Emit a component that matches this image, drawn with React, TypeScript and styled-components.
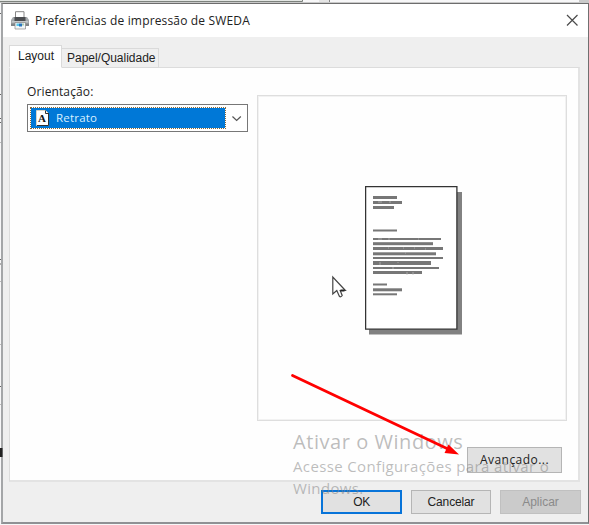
import React from "react";
import styled, { createGlobalStyle } from "styled-components";

const GlobalStyle = createGlobalStyle`
  * { box-sizing: border-box; }
  body { margin: 0; background: #fff; overflow: hidden; }
`;

const Desktop = styled.div`
  position: relative;
  width: 589px;
  height: 525px;
  padding: 3px 0 0 1px;
  overflow: hidden;
  background: #f7f7f8;
  font-family: "Open Sans", "Noto Sans", sans-serif;
  font-size: 12px;
  color: #222;
`;

const Backdrop = styled.svg`
  position: absolute;
  inset: 0;
`;

const Dialog = styled.section`
  position: relative;
  display: flex;
  flex-direction: column;
  width: 588px;
  height: 521px;
  border-style: solid;
  border-width: 1px 1px 2px 2px;
  border-color: #6d6d6d #707070 #8f9194 #a4a6a8;
  background: #efefef;
`;

const TitleBar = styled.header`
  display: flex;
  align-items: center;
  height: 33px;
  flex: none;
  padding: 0 9px 0 8px;
  background: #fff;
`;

const Label = styled.span<{ $spacing?: number; $size?: number }>`
  display: inline-block;
  white-space: nowrap;
  font-size: ${(p) => p.$size ?? 12}px;
  letter-spacing: ${(p) => p.$spacing ?? 0}px;
  line-height: 16px;
`;

const Title = styled.h1`
  margin: 0 0 0 6px;
  flex: 1;
  font-size: 12px;
  font-weight: 400;
  line-height: 16px;
`;

const TabStrip = styled.nav`
  display: flex;
  align-items: flex-end;
  flex: none;
  height: 31px;
  padding-left: 6px;
  position: relative;
  z-index: 1;
`;

const Tab = styled.div<{ $active?: boolean; $width: number }>`
  width: ${(p) => p.$width}px;
  height: ${(p) => (p.$active ? 23 : 20)}px;
  padding: ${(p) => (p.$active ? "2px 0 0 8px" : "1px 0 0 5px")};
  border: 1px solid #dadada;
  border-left-width: ${(p) => (p.$active ? 1 : 0)}px;
  border-bottom-color: ${(p) => (p.$active ? "#fff" : "#dadada")};
  background: ${(p) => (p.$active ? "#fff" : "#efefef")};
  font-family: "Liberation Sans", Arial, sans-serif;
`;

const Panel = styled.main`
  display: flex;
  flex-direction: column;
  height: 415px;
  width: 571px;
  margin: -1px 0 0 6px;
  padding: 16px 12px 8px 17px;
  border: 1px solid #dcdcdc;
  border-right: 2px solid #e3e3e3;
  border-bottom: 2px solid #e3e3e3;
  background: #fefefe;
`;

const Columns = styled.div`
  display: grid;
  grid-template-columns: 221px 310px;
  column-gap: 9px;
  height: 337px;
`;

const Field = styled.label`
  display: flex;
  flex-direction: column;
  gap: 4px;
`;

const Select = styled.div`
  display: flex;
  align-items: center;
  width: 221px;
  height: 28px;
  border: 1px solid #777;
  padding: 2px;
  background: #fff;
`;

const Selected = styled.div`
  display: flex;
  align-items: center;
  width: 197px;
  height: 22px;
  border: 1px dotted #e39b2f;
  background: #0078d7 padding-box;
  background-color: #0078d7;
  outline: 1px dotted #8a6a3a;
  outline-offset: -1px;
  color: #d8f0ff;
  padding-left: 5px;
  gap: 7px;
`;

const Preview = styled.div`
  margin-top: 11px;
  width: 310px;
  height: 326px;
  padding: 90px 0 0 107px;
  border: 1px solid #dedede;
  box-shadow: inset 0 0 0 1px #f2f2f2;
`;

const AdvancedRow = styled.div`
  display: flex;
  justify-content: flex-end;
  padding: 26px 4px 0 0;
`;

const Actions = styled.footer`
  display: flex;
  justify-content: flex-end;
  gap: 9px;
  padding: 8px 7px 0 0;
`;

const Button = styled.button<{ $kind?: "default" | "disabled" | "wide" }>`
  width: ${(p) => (p.$kind === "wide" ? 95 : p.$kind ? 81 : 80)}px;
  height: ${(p) => (p.$kind === "wide" ? 26 : 24)}px;
  padding: ${(p) => (p.$kind === "wide" ? "0 0 2px" : "0")};
  border: ${(p) => (p.$kind === "default" ? "2px solid #0874d9" : "1px solid #b5b5b5")};
  background: ${(p) => (p.$kind === "disabled" ? "#cbcbcb" : "#e1e1e1")};
  color: ${(p) => (p.$kind === "disabled" ? "#8a8a8a" : "#222")};
  border-color: ${(p) => (p.$kind === "disabled" ? "#c0c0c0" : undefined)};
  font-family: ${(p) => (p.$kind === "wide" ? '"Open Sans", sans-serif' : '"Liberation Sans", Arial, sans-serif')};
`;

const Watermark = styled.aside`
  position: absolute;
  left: 293px;
  top: 429px;
  width: 264px;
  color: rgba(130, 130, 130, 0.53);
  pointer-events: none;
`;

const WatermarkTitle = styled.div`
  font-size: 20px;
  line-height: 26px;
  letter-spacing: 0.55px;
  white-space: nowrap;
`;

const WatermarkText = styled.div`
  font-size: 15px;
  line-height: 22px;
  letter-spacing: 0.36px;
  white-space: nowrap;
`;

const Overlay = styled.svg`
  position: absolute;
  inset: 0;
  pointer-events: none;
`;

const PrinterIcon = () => (
  <svg width="18" height="19" viewBox="0 0 18 19">
    <path d="M4.5 7V.7h8.5V7" fill="#fff" stroke="#888" />
    <path d="M2 6h14l2 3v5H0V9z" fill="#a5a9ac" />
    <path d="M3.5 6h11v4h-11z" fill="#4b4d50" />
    <path d="M1 10h16v1.5H1z" fill="#c5c8ca" />
    <path d="M0 12.5h18V15H0z" fill="#808487" />
    <path d="M4 11.5h10.5V18H4z" fill="#f1f5f6" stroke="#888" strokeWidth=".7" />
    <path d="M5.5 12.5H8v2.5H5.5z" fill="#55c7ec" />
    <path d="M8 12.5h3v3H8z" fill="#2773bd" />
    <path d="M11.5 12.5h1v2h-1z" fill="#5aa06c" />
  </svg>
);

const PageIcon = () => (
  <svg width="13" height="16" viewBox="0 0 13 16">
    <path d="M.5.5h9l3 3v12H.5z" fill="#fff" stroke="#d9d5c6" />
    <path d="M9.5.5v3h3M12.5 3v12.5H1" fill="none" stroke="#333" />
    <text x="6.1" y="11.8" textAnchor="middle" fontFamily="Liberation Serif" fontWeight="700" fontSize="11" fill="#111">A</text>
  </svg>
);

const paragraphLines = [
  [10, 24, 3], [15, 29, 3], [20, 21, 3],
  [43.5, 24, 2],
  [52, 68, 2], [56.2, 60, 3], [61, 70, 3], [66.3, 63, 3], [71, 70, 2], [75, 58, 4], [81, 66, 2], [85, 49, 3],
  [97.5, 14, 2], [102.3, 29, 3], [107.3, 24, 2],
];

const PagePreview = () => (
  <svg width="97" height="149" viewBox="0 0 97 149">
    <path d="M4 6h93v142.5H4z" fill="#818181" />
    <path d="M.6.6h91.3v142.6H.6z" fill="#fff" stroke="#333" strokeWidth="1.3" />
    {paragraphLines.map(([y, width, height]) => (
      <rect key={y} x="8" y={y} width={width} height={height} fill="#777" />
    ))}
    <path d="M13 16h4m7 0h2M13 53h4m6 0h2m28 0h1M23 62h1m14 0h1m10 0h1m10 1h1M40 67h1M15 76v3m18-3v1M42 86v3m6-3v3M27 82h2" stroke="#bbb" strokeWidth=".7" />
  </svg>
);

const BackgroundEdges = () => (
  <Backdrop width="589" height="525">
    <path d="M0 0h302v2H0z" fill="#e3e6e3" />
    <path d="M0 1.5h302.5V0" fill="none" stroke="#7d827d" />
    <path d="M319 0h10v3h-10z" fill="#e5e5e5" />
    <path d="M329.5 0v3" stroke="#888" />
    <path d="M579 0h10v3h-10z" fill="#cacaca" />
    <path d="M0 2.5h589" stroke="#c9c9c9" />
    <path d="M0 13.5h2M0 94.5h2M0 118.5h2M0 122.5h2M0 259.5h2M0 264h2M0 386.5h2" stroke="#666" />
    <path d="M0 142.5h2M0 281.5h2M0 344.5h2M0 404.5h2" stroke="#bbb" />
  </Backdrop>
);

export default function App() {
  return (
    <Desktop>
      <GlobalStyle />
      <BackgroundEdges />
      <Dialog>
        <TitleBar>
          <PrinterIcon />
          <Title><Label $spacing={0.16}>Preferências de impressão de SWEDA</Label></Title>
          <svg width="13" height="13" viewBox="0 0 13 13">
            <path d="M1 1l10.5 10.5M11.5 1L1 11.5" stroke="#4b4b4b" strokeWidth="1.2" />
          </svg>
        </TitleBar>
        <TabStrip>
          <Tab $active $width={53}><Label>Layout</Label></Tab>
          <Tab $width={97}><Label $spacing={-0.02}>Papel/Qualidade</Label></Tab>
        </TabStrip>
        <Panel>
          <Columns>
            <Field>
              <Label $spacing={0.12}>Orientação:</Label>
              <Select>
                <Selected><PageIcon /><Label $size={11.5} $spacing={0.2}>Retrato</Label></Selected>
                <svg width="19" height="20" viewBox="0 0 19 20">
                  <path d="M6.5 8.5l4.2 4 4.2-4" fill="none" stroke="#555" strokeWidth="1.2" />
                </svg>
              </Select>
            </Field>
            <Preview><PagePreview /></Preview>
          </Columns>
          <AdvancedRow>
            <Button $kind="wide"><Label $spacing={0.45}>Avançado...</Label></Button>
          </AdvancedRow>
        </Panel>
        <Actions>
          <Button $kind="default"><Label $spacing={-0.5}>OK</Label></Button>
          <Button><Label $spacing={-0.15}>Cancelar</Label></Button>
          <Button $kind="disabled"><Label>Aplicar</Label></Button>
        </Actions>
      </Dialog>
      <Watermark>
        <WatermarkTitle>Ativar o Windows</WatermarkTitle>
        <WatermarkText>Acesse Configurações para ativar o<br />Windows.</WatermarkText>
      </Watermark>
      <Overlay width="589" height="525">
        <path d="M0 448h2.5v9H0z" fill="#222" />
        <path d="M292.5 375.5L448 449" stroke="#f00" strokeWidth="2.8" strokeLinecap="round" />
        <path d="M459 454.5l-10.5-10-4 8.5z" fill="#f00" />
        <path d="M332.8 277v17l4-3.5 2.4 5.5q1.5 1.8 3-.5l-2-5h5.2z" fill="#fff" stroke="#444" strokeWidth="1.2" />
        <path d="M340.5 290.5h4" stroke="#222" strokeWidth="2" />
      </Overlay>
    </Desktop>
  );
}
